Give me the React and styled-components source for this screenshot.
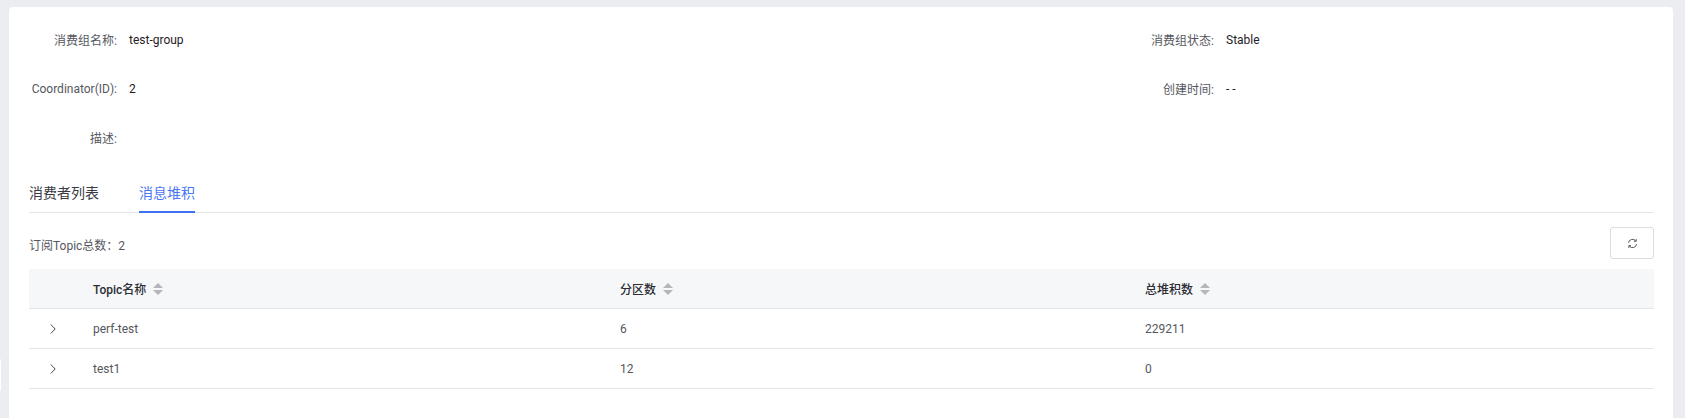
import styled, { createGlobalStyle } from 'styled-components';

const GlobalStyle = createGlobalStyle`
  html, body {
    margin: 0;
    padding: 0;
    height: 100%;
    background: #ecedf1;
    overflow: hidden;
    font-family: Roboto, "Noto Sans CJK SC", sans-serif;
  }
`;

const infoItems = [
  { label: '消费组名称:', value: 'test-group' },
  { label: '消费组状态:', value: 'Stable' },
  { label: 'Coordinator(ID):', value: '2' },
  { label: '创建时间:', value: '- -' },
  { label: '描述:', value: '' },
];

const topics = [
  { name: 'perf-test', partitions: 6, lag: 229211 },
  { name: 'test1', partitions: 12, lag: 0 },
];

const SortIcon = () => (
  <SortSvg viewBox="0 0 10 12" aria-hidden="true">
    <path d="M5 0 10 5H0Z" fill="#b4b6bc" />
    <path d="M5 12 0 7H10Z" fill="#b4b6bc" />
  </SortSvg>
);

const RefreshIcon = () => (
  <svg width="11" height="11" viewBox="0 0 12 12" fill="none" aria-hidden="true">
    <path d="M1.6 5.2A4.5 4.5 0 0 1 9.4 3" stroke="#44464c" strokeWidth="1" />
    <path d="M10.4 6.8A4.5 4.5 0 0 1 2.6 9" stroke="#44464c" strokeWidth="1" />
    <path d="M10 1.2V3.6H7.6" stroke="#44464c" strokeWidth="1" />
    <path d="M2 10.8V8.4H4.4" stroke="#44464c" strokeWidth="1" />
  </svg>
);

const Chevron = () => (
  <svg width="6" height="10" viewBox="0 0 6 10" fill="none" aria-hidden="true">
    <path d="M0.8 0.5 5.2 5 0.8 9.5" stroke="#44464c" strokeWidth="1" />
  </svg>
);

const App = () => (
  <Page>
    <GlobalStyle />
    <SideNotch />
    <Card>
      <InfoGrid>
        {infoItems.map((item) => (
          <InfoItem key={item.label}>
            <InfoLabel>{item.label}</InfoLabel>
            <InfoValue>{item.value}</InfoValue>
          </InfoItem>
        ))}
      </InfoGrid>

      <Tabs>
        <Tab>消费者列表</Tab>
        <Tab $active>消息堆积</Tab>
      </Tabs>

      <Toolbar>
        <TotalText>订阅Topic总数：2</TotalText>
        <RefreshButton type="button">
          <RefreshIcon />
        </RefreshButton>
      </Toolbar>

      <Table>
        <HeadRow>
          <span />
          <HeadCell>Topic名称<SortIcon /></HeadCell>
          <HeadCell>分区数<SortIcon /></HeadCell>
          <HeadCell>总堆积数<SortIcon /></HeadCell>
        </HeadRow>
        {topics.map((topic) => (
          <BodyRow key={topic.name}>
            <ExpandCell><Chevron /></ExpandCell>
            <BodyCell>{topic.name}</BodyCell>
            <BodyCell>{topic.partitions}</BodyCell>
            <BodyCell>{topic.lag}</BodyCell>
          </BodyRow>
        ))}
      </Table>
    </Card>
  </Page>
);

export default App;

const Page = styled.div`
  position: relative;
  box-sizing: border-box;
  height: 418px;
  padding: 7px 12px 0 9px;
  overflow: hidden;
`;

const SideNotch = styled.div`
  position: absolute;
  left: -6px;
  top: 358px;
  width: 7px;
  height: 34px;
  background: #fff;
  border-radius: 3px;
`;

const Card = styled.div`
  box-sizing: border-box;
  height: 100%;
  padding: 0 19px 0 20px;
  background: #fff;
  border-radius: 4px 4px 0 0;
`;

const InfoGrid = styled.div`
  display: grid;
  grid-template-columns: 1097px 1fr;
  grid-auto-rows: 49px;
  padding-top: 8px;
`;

const InfoItem = styled.div`
  display: flex;
  align-items: center;
  gap: 12px;
  font-size: 12px;
`;

const InfoLabel = styled.span`
  width: 88px;
  text-align: right;
  white-space: nowrap;
  color: #55575e;
`;

const InfoValue = styled.span`
  color: #1f2126;
`;

const Tabs = styled.div`
  display: flex;
  gap: 40px;
  height: 40px;
  margin-top: 10px;
  border-bottom: 1px solid #e4e6ec;
`;

const Tab = styled.div`
  display: flex;
  align-items: center;
  font-size: 14px;
  color: ${(p) => (p.$active ? '#4a78f5' : '#3a3c42')};
  border-bottom: 2px solid ${(p) => (p.$active ? '#3f72f2' : 'transparent')};
  margin-bottom: -1px;
`;

const Toolbar = styled.div`
  display: flex;
  align-items: center;
  justify-content: space-between;
  padding-top: 14px;
  margin-bottom: 10px;
`;

const TotalText = styled.div`
  padding-top: 3px;
  font-size: 12px;
  color: #55575e;
`;

const RefreshButton = styled.button`
  display: flex;
  align-items: center;
  justify-content: center;
  box-sizing: border-box;
  width: 44px;
  height: 32px;
  padding: 0;
  background: #fff;
  border: 1px solid #dcdde2;
  border-radius: 3px;
`;

const Table = styled.div`
  font-size: 12px;
`;

const HeadRow = styled.div`
  display: grid;
  grid-template-columns: 48px 527px 525px 1fr;
  align-items: center;
  height: 40px;
  box-sizing: border-box;
  background: #f6f7f9;
  border-bottom: 1px solid #e4e6ec;
`;

const HeadCell = styled.div`
  display: flex;
  align-items: center;
  gap: 7px;
  padding-left: 16px;
  font-weight: 500;
  color: #2b2d33;
`;

const SortSvg = styled.svg`
  width: 10px;
  height: 12px;
`;

const BodyRow = styled.div`
  display: grid;
  grid-template-columns: 48px 527px 525px 1fr;
  align-items: center;
  height: 40px;
  box-sizing: border-box;
  border-bottom: 1px solid #e4e6ec;
`;

const ExpandCell = styled.div`
  display: flex;
  justify-content: center;
`;

const BodyCell = styled.div`
  padding: 1px 0 0 16px;
  color: #55575e;
`;
